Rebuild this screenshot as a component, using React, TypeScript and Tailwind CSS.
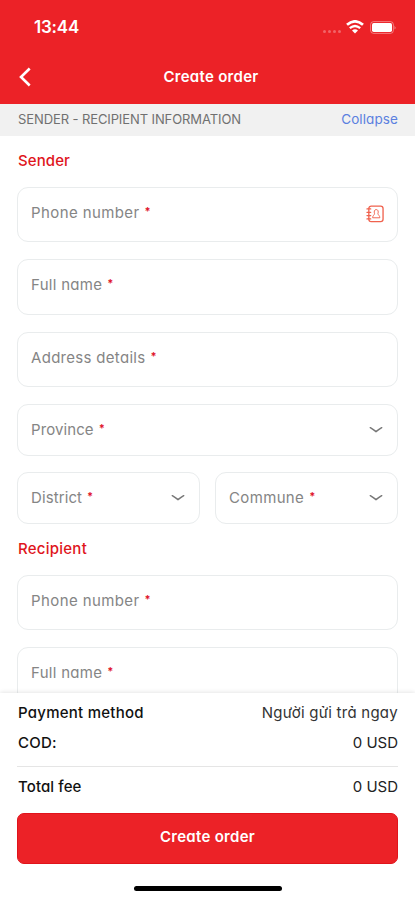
import React from "react";

const label = "flex whitespace-nowrap text-[15px] leading-5 text-[#858585]";

function Star() {
  return <span className="ml-[5px] text-[11px] font-bold leading-[17px] tracking-normal text-[#e0142c]">*</span>;
}

function Chevron() {
  return (
    <svg width="14" height="8" viewBox="0 0 14 8" fill="none" className="shrink-0">
      <path d="M1.3 1.7 Q4.5 3.6 7 5.6 Q9.5 3.6 12.7 1.7" stroke="#777" strokeWidth="1.5" strokeLinecap="round" />
    </svg>
  );
}

function ContactBook() {
  return (
    <svg width="18" height="18" viewBox="0 0 19 19" fill="none" stroke="#f0624e" className="shrink-0">
      <rect x="3" y="1.2" width="15" height="16.4" rx="2.5" strokeWidth="1.4" />
      <path d="M1 4.2h4M1 7.7h4M1 11.2h4M1 14.7h4" strokeWidth="1.3" strokeLinecap="round" />
      <path d="M9 9.2C8.2 6.8 8.9 4.8 10.8 4.8S13.4 6.8 12.6 9.2M9 9.2C8.8 10.8 7 11 7 13.5H14.6C14.6 11 12.8 10.8 12.6 9.2" strokeWidth="1" strokeLinejoin="round" />
    </svg>
  );
}

type FieldProps = { text: string; tracking: string; box: string; children?: React.ReactNode };

function Field({ text, tracking, box, children }: FieldProps) {
  return (
    <div className={`flex justify-between rounded-[11px] border border-[#e9eced] bg-white pl-[13px] pr-[14px] ${box}`}>
      <div className={`${label} ${tracking}`}>
        {text}
        <Star />
      </div>
      {children}
    </div>
  );
}

export default function App() {
  return (
    <div className="flex h-[900px] w-[415px] flex-col overflow-hidden bg-white font-['Inter',sans-serif] [font-feature-settings:'cv11'_1]">
      <header className="h-[104px] shrink-0 bg-[#ec2227] text-white">
        <div className="flex h-[52px] items-center justify-between pl-[34px] pr-[18px] pt-[2px]">
          <span className="text-[17px] font-semibold leading-5 tracking-[-0.2px]">13:44</span>
          <div className="flex items-center">
            <div className="mr-[5px] mt-[9px] flex gap-[2px]">
              <i className="size-[3px] rounded-full bg-white/30" />
              <i className="size-[3px] rounded-full bg-white/30" />
              <i className="size-[3px] rounded-full bg-white/30" />
              <i className="size-[3px] rounded-full bg-white/30" />
            </div>
            <svg width="18" height="14" viewBox="0 0 18 14" fill="none" stroke="white" className="mr-[6px]">
              <path d="M1 4.8Q9-2 17 4.8" strokeWidth="2.8" />
              <path d="M3.8 8.2Q9 3.8 14.2 8.2" strokeWidth="2.3" />
              <path d="M9 13.6L6 10.5Q9 8.2 12 10.5Z" fill="white" stroke="none" />
            </svg>
            <svg width="27" height="13" viewBox="0 0 27 13">
              <rect x="0.6" y="0.6" width="22.8" height="11.8" rx="3" fill="none" stroke="white" strokeOpacity=".4" />
              <rect x="2" y="2" width="20" height="9" rx="1.7" fill="white" />
              <path d="M24.6 4.5Q26.2 6.5 24.6 8.5Z" fill="white" fillOpacity=".6" />
            </svg>
          </div>
        </div>
        <div className="grid h-[50px] grid-cols-[40px_1fr_34px] items-center">
          <svg width="14" height="22" viewBox="0 0 14 22" fill="none" className="ml-[18px]">
            <path d="M11.7 2.5L3 11l8.7 8.5" stroke="white" strokeWidth="2.6" />
          </svg>
          <h1 className="whitespace-nowrap pl-px text-center text-[15px] font-semibold leading-5 tracking-[0.3px]">Create order</h1>
        </div>
      </header>

      <div className="flex h-8 shrink-0 items-center justify-between bg-[#f1f1f1] pb-[2px] pl-[18px] pr-[17px]">
        <span className="whitespace-nowrap text-[13px] leading-5 tracking-[-0.1px] text-[#707070]">SENDER - RECIPIENT INFORMATION</span>
        <span className="whitespace-nowrap text-[13.5px] leading-5 tracking-[0.1px] text-[#5b80e0]">Collapse</span>
      </div>

      <main className="flex min-h-0 flex-1 flex-col overflow-hidden px-[17px]">
        <h2 className="mt-[15px] shrink-0 pl-px text-[15px] font-medium leading-5 tracking-[0.1px] text-[#e0151c]">Sender</h2>
        <Field text="Phone number" tracking="tracking-[0.4px]" box="mt-[16px] h-[55px] shrink-0 pt-[15px]">
          <div className="-mr-px pt-[2px]"><ContactBook /></div>
        </Field>
        <Field text="Full name" tracking="tracking-[0.3px]" box="mt-[17px] h-[56px] shrink-0 pt-[15px]" />
        <Field text="Address details" tracking="tracking-[0.3px]" box="mt-[17px] h-[55px] shrink-0 pt-[15px]" />
        <Field text="Province" tracking="tracking-[0.1px]" box="mt-[17px] h-[52px] shrink-0 items-center">
          <Chevron />
        </Field>
        <div className="mt-4 flex shrink-0 gap-[15px]">
          <Field text="District" tracking="tracking-[0.1px]" box="h-[52px] w-[183px] items-center"><Chevron /></Field>
          <Field text="Commune" tracking="tracking-[0.35px]" box="h-[52px] w-[183px] items-center"><Chevron /></Field>
        </div>
        <h2 className="mt-[15px] shrink-0 pl-px text-[15px] font-medium leading-5 tracking-[0.25px] text-[#e0151c]">Recipient</h2>
        <Field text="Phone number" tracking="tracking-[0.4px]" box="mt-[16px] h-[55px] shrink-0 pt-[15px]" />
        <Field text="Full name" tracking="tracking-[0.3px]" box="mt-[17px] h-[56px] shrink-0 pt-[15px]" />
      </main>

      <footer className="relative h-[207px] shrink-0 bg-white px-[17px] pt-[10px] text-[15px] text-[#111] shadow-[0_-1px_4px_rgba(0,0,0,0.1)]">
        <div className="flex h-5 items-center justify-between whitespace-nowrap pl-px">
          <span className="font-medium tracking-[0.25px]">Payment method</span>
          <span className="tracking-[0.25px] text-[#333]">Người gửi trả ngay</span>
        </div>
        <div className="mt-[10px] flex h-5 items-center justify-between pl-px">
          <span className="font-medium tracking-[0.2px]">COD:</span>
          <span className="text-[#222]">0 USD</span>
        </div>
        <div className="mt-[13px] h-px bg-[#e5e5e5]" />
        <div className="mt-[10px] flex h-5 items-center justify-between pl-px">
          <span className="font-medium tracking-[0.1px]">Total fee</span>
          <span className="text-[#222]">0 USD</span>
        </div>
        <button className="mt-[16px] flex h-[51px] w-[381px] items-center justify-center rounded-[7px] border border-[#e0141b] bg-[#ec2227] pb-[2px] font-semibold tracking-[0.3px] text-white">Create order</button>
        <div className="mx-auto mt-[22px] h-[5px] w-[148px] rounded-full bg-black" />
      </footer>
    </div>
  );
}
